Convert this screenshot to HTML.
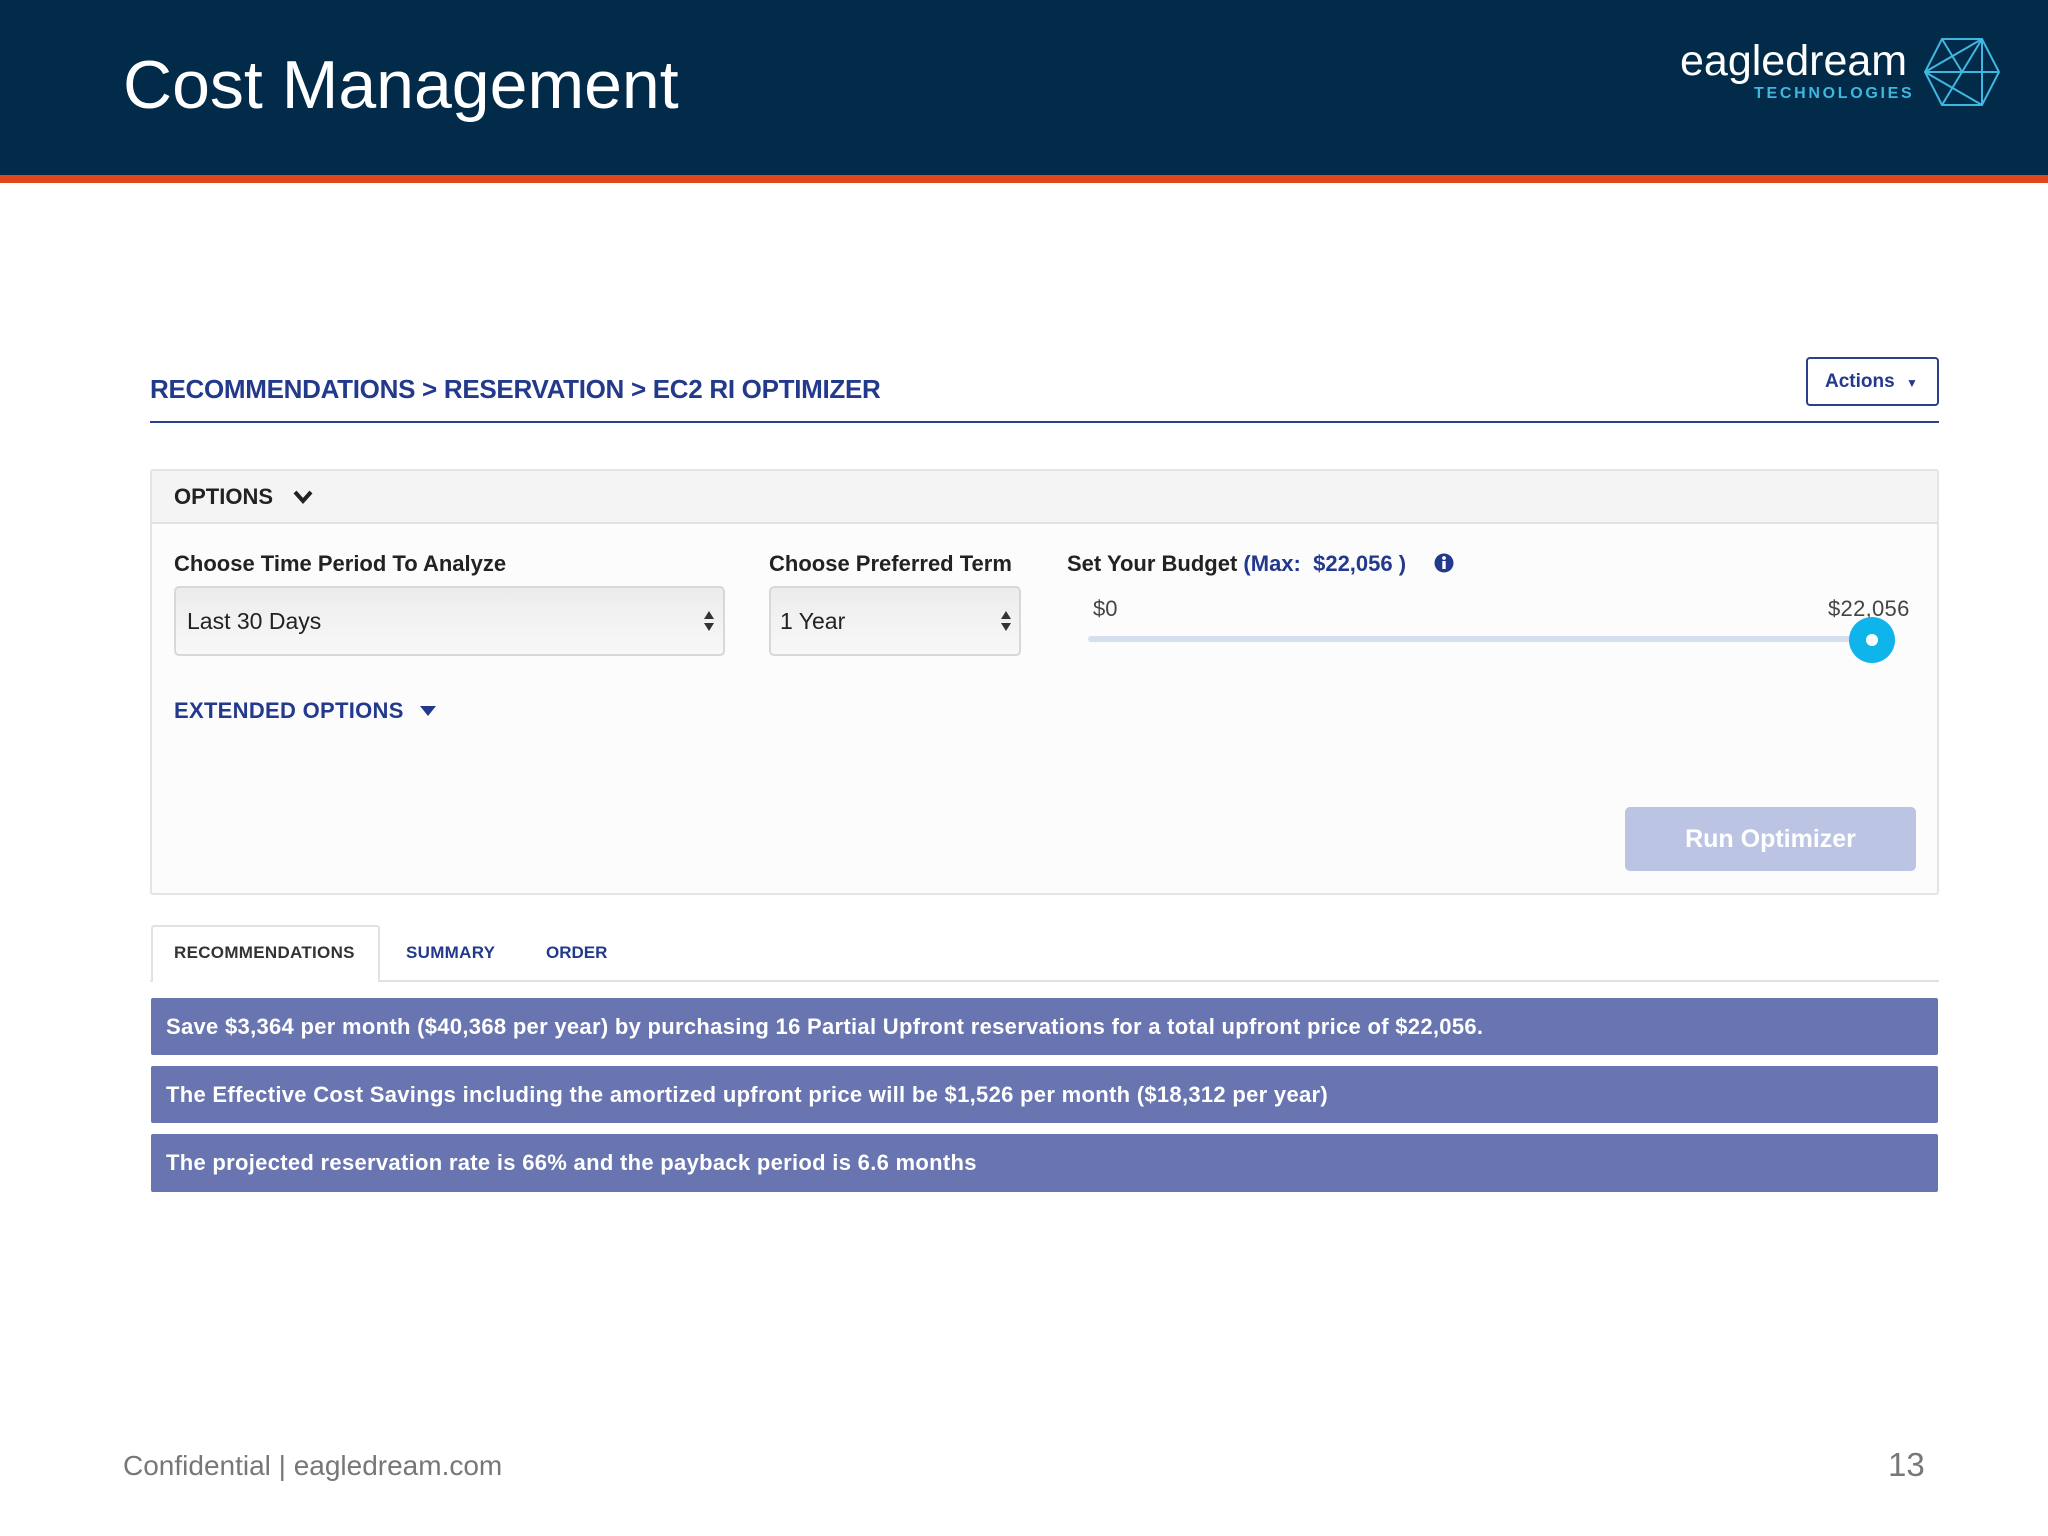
<!DOCTYPE html>
<html><head><meta charset="utf-8"><style>
*{margin:0;padding:0;box-sizing:border-box}
body{width:2048px;height:1536px;background:#fff;position:relative;overflow:hidden;font-family:"Liberation Sans","DejaVu Sans",sans-serif}
.a{position:absolute;white-space:nowrap}
.b{font-weight:bold}
</style></head><body>
<div class="a" style="left:0;top:0;width:2048px;height:175px;background:#022a49"></div>
<div class="a" style="left:0;top:175px;width:2048px;height:8px;background:#e0461a"></div>
<div class="a" style="left:123px;top:45px;font-size:68px;color:#fff;line-height:80px">Cost Management</div>
<div class="a" style="left:1680px;top:34px;font-size:43px;color:#fff;line-height:54px">eagledream</div>
<div class="a b" style="left:1754px;top:85px;font-size:16px;color:#3eb8e0;letter-spacing:2.7px;line-height:18px">TECHNOLOGIES</div>
<svg class="a" style="left:1922px;top:36px" width="80" height="72" viewBox="0 0 80 72" fill="none" stroke="#3eb8e0" stroke-width="2">
<polygon points="20,3 60,3 77,36 60,69 20,69 3,36"/>
<line x1="20" y1="3" x2="40" y2="36"/><line x1="60" y1="3" x2="3" y2="36"/><line x1="60" y1="3" x2="60" y2="69"/><line x1="3" y1="36" x2="77" y2="36"/><line x1="3" y1="36" x2="60" y2="69"/><line x1="40" y1="36" x2="20" y2="69"/><line x1="60" y1="3" x2="40" y2="36"/>
</svg>

<div class="a b" style="left:150px;top:374px;font-size:26px;color:#23398b;line-height:30px;letter-spacing:-0.3px">RECOMMENDATIONS &gt; RESERVATION &gt; EC2 RI OPTIMIZER</div>
<div class="a" style="left:150px;top:421px;width:1789px;height:2px;background:#2b3f8e"></div>
<div class="a b" style="left:1806px;top:357px;width:133px;height:49px;border:2px solid #2b3f8e;border-radius:4px;color:#23398b;font-size:19px;line-height:45px;padding-left:17px">Actions <span style="font-size:12px;margin-left:6px">▼</span></div>

<div class="a" style="left:150px;top:469px;width:1789px;height:426px;border:2px solid #e4e4e4;border-radius:3px;background:#fcfcfd"></div>
<div class="a" style="left:152px;top:471px;width:1785px;height:53px;background:#f4f4f5;border-bottom:2px solid #e2e2e2"></div>
<div class="a b" style="left:174px;top:484px;font-size:22px;color:#222;line-height:26px">OPTIONS</div>
<svg class="a" style="left:292px;top:489px" width="22" height="16" viewBox="0 0 22 16"><path d="M3 3 L11 12 L19 3" stroke="#222" stroke-width="4" fill="none"/></svg>

<div class="a b" style="left:174px;top:551px;font-size:22px;color:#222;line-height:26px">Choose Time Period To Analyze</div>
<div class="a b" style="left:769px;top:551px;font-size:22px;color:#222;line-height:26px">Choose Preferred Term</div>
<div class="a b" style="left:1067px;top:551px;font-size:22px;color:#222;line-height:26px">Set Your Budget <span style="color:#23398b">(Max: &nbsp;$22,056 )</span></div>
<svg class="a" style="left:1434px;top:552px" width="20" height="22" viewBox="0 0 20 22"><circle cx="10" cy="11" r="9.5" fill="#23398b"/><rect x="8.3" y="9" width="3.4" height="8" fill="#fff"/><circle cx="10" cy="6" r="1.9" fill="#fff"/></svg>

<div class="a" style="left:174px;top:586px;width:551px;height:70px;border:2px solid #d8d8d8;border-radius:5px;background:linear-gradient(#ececec,#f8f8f8)"></div>
<div class="a" style="left:187px;top:607px;font-size:23px;color:#222;line-height:28px">Last 30 Days</div>
<svg class="a" style="left:703px;top:610px" width="12" height="22" viewBox="0 0 12 22"><path d="M6 1 L11 9 H1Z M6 21 L11 13 H1Z" fill="#333"/></svg>
<div class="a" style="left:769px;top:586px;width:252px;height:70px;border:2px solid #d8d8d8;border-radius:5px;background:linear-gradient(#ececec,#f8f8f8)"></div>
<div class="a" style="left:780px;top:607px;font-size:23px;color:#222;line-height:28px">1 Year</div>
<svg class="a" style="left:1000px;top:610px" width="12" height="22" viewBox="0 0 12 22"><path d="M6 1 L11 9 H1Z M6 21 L11 13 H1Z" fill="#333"/></svg>

<div class="a" style="left:1093px;top:596px;font-size:22px;color:#444;line-height:26px">$0</div>
<div class="a" style="left:1828px;top:596px;font-size:22px;color:#444;line-height:26px;letter-spacing:0.3px">$22,056</div>
<div class="a" style="left:1088px;top:636px;width:784px;height:6px;background:#d5dff0;border-radius:3px"></div>
<div class="a" style="left:1849px;top:617px;width:46px;height:46px;border-radius:50%;background:#0eb4ea"></div>
<div class="a" style="left:1866px;top:634px;width:12px;height:12px;border-radius:50%;background:#fff"></div>

<div class="a b" style="left:174px;top:698px;font-size:22px;color:#23398b;line-height:26px;letter-spacing:0.3px">EXTENDED OPTIONS</div>
<svg class="a" style="left:419px;top:705px" width="18" height="12" viewBox="0 0 18 12"><path d="M1 1 H17 L9 11Z" fill="#23398b"/></svg>

<div class="a b" style="left:1625px;top:807px;width:291px;height:64px;background:#bcc4e4;border-radius:5px;color:#fff;font-size:25px;line-height:64px;text-align:center">Run Optimizer</div>

<div class="a" style="left:150px;top:980px;width:1789px;height:2px;background:#e2e2e2"></div>
<div class="a" style="left:151px;top:925px;width:229px;height:57px;border:2px solid #e2e2e2;border-bottom:none;background:#fff;border-radius:3px 3px 0 0"></div>
<div class="a b" style="left:174px;top:943px;font-size:17px;color:#333;line-height:20px;letter-spacing:0.3px">RECOMMENDATIONS</div>
<div class="a b" style="left:406px;top:943px;font-size:17px;color:#23398b;line-height:20px;letter-spacing:0.3px">SUMMARY</div>
<div class="a b" style="left:546px;top:943px;font-size:17px;color:#23398b;line-height:20px">ORDER</div>

<div class="a b" style="left:151px;top:998px;width:1787px;height:57px;background:#6875b0;border-radius:2px;color:#fff;font-size:22px;line-height:57px;padding-left:15px;letter-spacing:0.3px">Save $3,364 per month ($40,368 per year) by purchasing 16 Partial Upfront reservations for a total upfront price of $22,056.</div>
<div class="a b" style="left:151px;top:1066px;width:1787px;height:57px;background:#6875b0;border-radius:2px;color:#fff;font-size:22px;line-height:57px;padding-left:15px;letter-spacing:0.3px">The Effective Cost Savings including the amortized upfront price will be $1,526 per month ($18,312 per year)</div>
<div class="a b" style="left:151px;top:1134px;width:1787px;height:58px;background:#6875b0;border-radius:2px;color:#fff;font-size:22px;line-height:58px;padding-left:15px;letter-spacing:0.3px">The projected reservation rate is 66% and the payback period is 6.6 months</div>

<div class="a" style="left:123px;top:1449px;font-size:28px;color:#777;line-height:34px">Confidential | eagledream.com</div>
<div class="a" style="left:1888px;top:1446px;font-size:33px;color:#777;line-height:38px">13</div>
</body></html>
